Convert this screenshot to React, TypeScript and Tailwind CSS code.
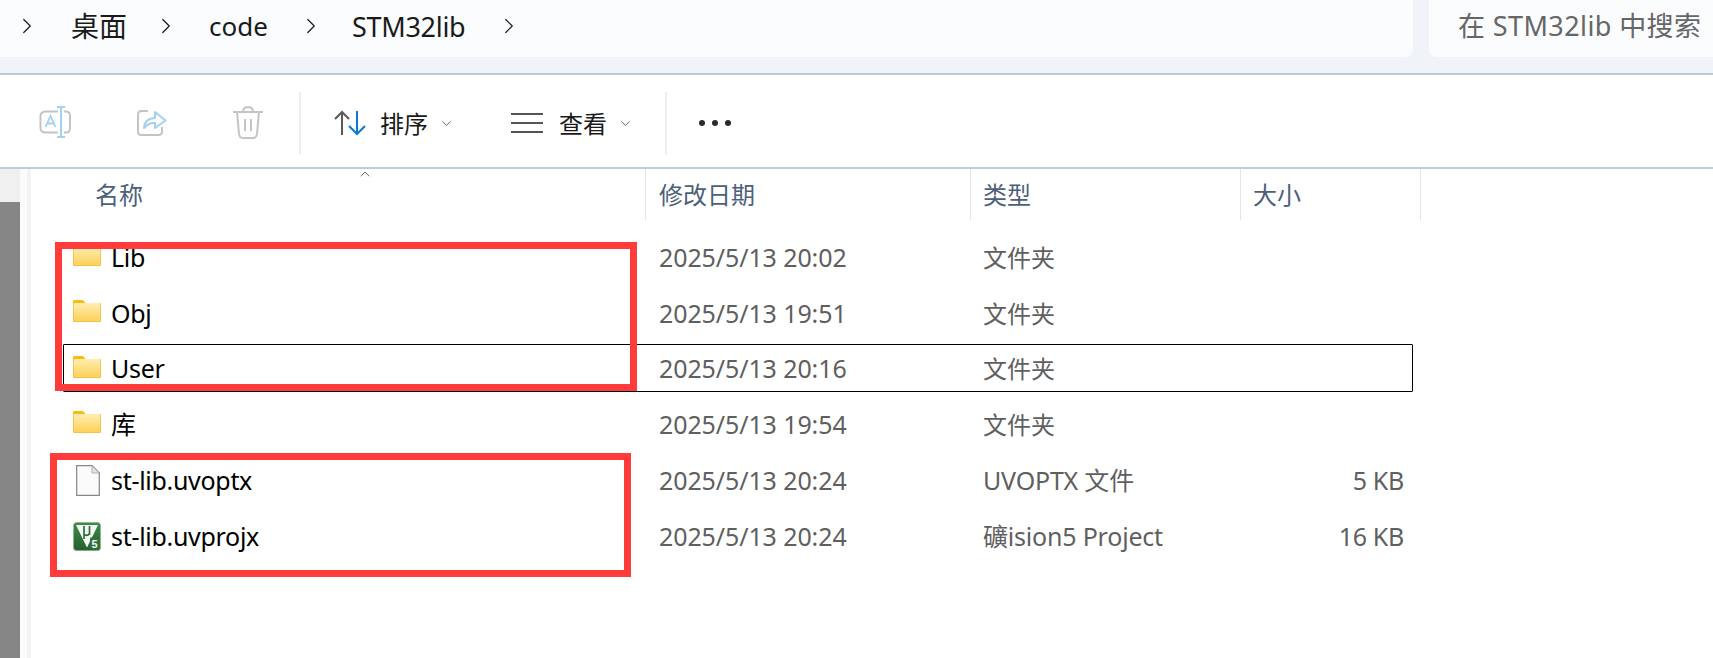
import { ChevronRight, ChevronDown, ChevronUp } from 'lucide-react'

const rows = [
  { name: 'Lib', date: '2025/5/13 20:02', type: '文件夹', size: '', icon: 'folder' },
  { name: 'Obj', date: '2025/5/13 19:51', type: '文件夹', size: '', icon: 'folder' },
  { name: 'User', date: '2025/5/13 20:16', type: '文件夹', size: '', icon: 'folder', focused: true },
  { name: '库', date: '2025/5/13 19:54', type: '文件夹', size: '', icon: 'folder' },
  { name: 'st-lib.uvoptx', date: '2025/5/13 20:24', type: 'UVOPTX 文件', size: '5 KB', icon: 'file' },
  { name: 'st-lib.uvprojx', date: '2025/5/13 20:24', type: '礦ision5 Project', size: '16 KB', icon: 'keil' },
]

function FolderIcon() {
  return (
    <svg width="28" height="22" viewBox="0 0 28 22" className="mt-[-5px]">
      <defs>
        <linearGradient id="folderBody" x1="0" y1="0" x2="0" y2="1">
          <stop offset="0" stopColor="#feeeb0" />
          <stop offset="1" stopColor="#fdcf55" />
        </linearGradient>
      </defs>
      <path d="M0 1.500Q0 0 1.500 0H8.500Q10 0 11 1L12.500 3H0Z" fill="#fcb914" />
      <path d="M0 3H28V20.500Q28 22 26.500 22H1.500Q0 22 0 20.500Z" fill="url(#folderBody)" />
      <path d="M.4 3V20.500Q.4 21.600 1.500 21.600H26.500Q27.600 21.600 27.600 20.500V3" fill="none" stroke="#f3b93c" strokeWidth=".8" />
    </svg>
  )
}

function FileIcon() {
  return (
    <svg width="24" height="31" viewBox="0 0 24 31" className="ml-[3px]">
      <path d="M.7.7H16L23.3 8V30.3H.7Z" fill="#fbfbfc" stroke="#868686" strokeWidth="1.2" />
      <path d="M16 .7V8H23.3Z" fill="#e4e4e4" stroke="#a0a0a0" strokeWidth=".8" />
    </svg>
  )
}

function KeilIcon() {
  return (
    <svg width="28" height="29" viewBox="0 0 28 29">
      <defs>
        <linearGradient id="keilBg" x1="0" y1="0" x2="0" y2="1">
          <stop offset="0" stopColor="#3f8a48" />
          <stop offset="1" stopColor="#25602f" />
        </linearGradient>
      </defs>
      <rect x=".3" y=".3" width="27.4" height="28.4" rx="3.5" fill="url(#keilBg)" stroke="#b9cfbb" strokeWidth=".6" />
      <path d="M3 3H25L14 25.500Z" fill="#f4f8f4" />
      <path d="M11 4V17M11 12.500Q14.500 14.500 16.500 11.500M16.500 4V13" fill="none" stroke="#2c6e35" strokeWidth="1.700" />
      <rect x="17" y="15.500" width="9.500" height="12" rx="1" fill="#2f7038" />
      <text x="21.500" y="26" textAnchor="middle" fontSize="11" fontWeight="700" fill="#f4f8f4" fontFamily="Liberation Sans, sans-serif">5</text>
    </svg>
  )
}

function RowIcon({ kind }: { kind: string }) {
  if (kind === 'file') return <FileIcon />
  if (kind === 'keil') return <KeilIcon />
  return <FolderIcon />
}

export default function App() {
  return (
    <div className="relative h-[658px] w-[1713px] overflow-hidden bg-white font-['Noto_Sans','Noto_Sans_CJK_SC',sans-serif] text-[25px]">
      {/* address bar */}
      <div className="flex h-[73px] gap-[16px] bg-[#f0f4f8]">
        <div className="flex h-[57px] w-[1413px] items-center rounded-br-lg bg-[#fbfcfe] pb-[5px] text-[#1a1a1a]">
          <ChevronRight className="ml-[14px] h-[26px] w-[26px]" strokeWidth={1.1} />
          <span className="ml-[31px] text-[28px] leading-none">桌面</span>
          <ChevronRight className="ml-[26px] h-[26px] w-[26px]" strokeWidth={1.1} />
          <span className="ml-[30px] w-[60px] text-[26px] leading-none">code</span>
          <ChevronRight className="ml-[29px] h-[26px] w-[26px]" strokeWidth={1.1} />
          <span className="ml-[28px] w-[114px] whitespace-nowrap text-[27px] leading-none tracking-[-0.3px]">STM32lib</span>
          <ChevronRight className="ml-[30px] h-[26px] w-[26px]" strokeWidth={1.1} />
        </div>
        <div className="flex h-[57px] flex-1 items-center rounded-bl-lg bg-[#fbfcfe] pb-[4px] pl-[29px] text-[27px] tracking-[0.4px] whitespace-nowrap text-[#666666]">
          在 STM32lib 中搜索
        </div>
      </div>
      <div className="h-[2px] bg-[#bccdd9]" />

      {/* toolbar */}
      <div className="flex h-[92px] items-center pt-[4px]">
        <svg width="34" height="32" viewBox="0 0 34 32" className="ml-[38px] mt-[-2px]" fill="none">
          <path d="M20 5.500H8Q2.500 5.500 2.500 10V22Q2.500 26.500 8 26.500H20M26 5.500H28Q32 5.500 32 10V22Q32 26.500 28 26.500H26" stroke="#c4c4c4" strokeWidth="2" />
          <path d="M19 1H27M23 1V31M19 31H27" stroke="#a4d0f2" strokeWidth="2" />
          <path d="M7.500 21L12.500 10L17.500 21M9.500 17.500H15.500" stroke="#a4d0f2" strokeWidth="1.800" />
        </svg>
        <svg width="30" height="30" viewBox="0 0 30 30" className="ml-[65px] mt-[-2px]" fill="none">
          <path d="M11 4H4.500Q1 4 1 7.500V24.500Q1 28 4.500 28H21.500Q25 28 25 24.500V20" stroke="#c4c4c4" strokeWidth="2" />
          <path d="M7 21Q7.500 11.500 18 11V5L28.500 13.500L18 21V16Q11.500 15.500 7 21Z" stroke="#a4d0f2" strokeWidth="2" strokeLinejoin="round" />
        </svg>
        <svg width="30" height="33" viewBox="0 0 30 33" className="ml-[66px] mt-[-2px]" fill="none" stroke="#c4c4c4" strokeWidth="2">
          <path d="M0 6H30M10 6Q10 1 15 1Q20 1 20 6" />
          <path d="M4 6L6 28Q6.500 32 10 32H20Q23.500 32 24 28L26 6" />
          <path d="M12 13V25M18 13V25" />
        </svg>
        <div className="ml-[36px] h-[62px] w-[2px] bg-[#eeeeee]" />
        <svg width="33" height="26" viewBox="0 0 33 26" className="ml-[33px]" fill="none" strokeWidth="2">
          <path d="M8 25V2M1 9L8 2L15 9" stroke="#5a5a5a" />
          <path d="M23 1V24M15 16L23 24L31 16" stroke="#0a78d7" />
        </svg>
        <span className="ml-[13px] mt-[2px] text-[24px] leading-none text-[#1a1a1a]">排序</span>
        <ChevronDown className="ml-[11px] h-[15px] w-[15px] text-[#555555]" strokeWidth={1.4} />
        <div className="ml-[57px] flex h-[20px] w-[32px] flex-col justify-between">
          <div className="h-[2px] bg-[#555555]" />
          <div className="h-[2px] bg-[#555555]" />
          <div className="h-[2px] bg-[#555555]" />
        </div>
        <span className="ml-[16px] mt-[2px] text-[24px] leading-none text-[#1a1a1a]">查看</span>
        <ChevronDown className="ml-[11px] h-[15px] w-[15px] text-[#555555]" strokeWidth={1.4} />
        <div className="ml-[32px] h-[62px] w-[2px] bg-[#eeeeee]" />
        <div className="ml-[32px] flex gap-[7px]">
          <div className="h-[6px] w-[6px] rounded-full bg-[#2b2b2b]" />
          <div className="h-[6px] w-[6px] rounded-full bg-[#2b2b2b]" />
          <div className="h-[6px] w-[6px] rounded-full bg-[#2b2b2b]" />
        </div>
      </div>
      <div className="h-[2px] bg-[#bccdd9]" />

      {/* file list */}
      <div className="flex h-[489px]">
        <div className="flex w-[20px] flex-col bg-[#f0f0f0]">
          <div className="h-[33px]" />
          <div className="flex-1 bg-[#868686]" />
        </div>
        <div className="w-[7px] bg-[#fbfbfb]" />
        <div className="w-[4px] bg-[#f3f3f3]" />
        <div className="flex-1">
          <div className="grid h-[51px] grid-cols-[615px_325px_270px_180px] text-[24px] text-[#4c607a]">
            <div className="flex items-center border-r border-[#e5e5e5] pl-[64px]">名称</div>
            <div className="flex items-center border-r border-[#e5e5e5] pl-[13px]">修改日期</div>
            <div className="flex items-center border-r border-[#e5e5e5] pl-[12px]">类型</div>
            <div className="flex items-center border-r border-[#e5e5e5] pl-[12px]">大小</div>
          </div>
          <div className="pt-[10px] pl-[32px]">
            {rows.map(row => (
              <div key={row.name} className="relative grid h-[55.7px] w-[1350px] grid-cols-[596px_324px_257px_164px] items-center">
                {row.focused && <div className="absolute inset-x-0 top-[2.6px] bottom-[5.4px] rounded-[1px] border border-black" />}
                <div className="flex items-center">
                  <div className="ml-[10px] flex w-[38px] items-center">
                    <RowIcon kind={row.icon} />
                  </div>
                  <span className="text-black tracking-[-0.3px]">{row.name}</span>
                </div>
                <div className="whitespace-nowrap tracking-[-0.1px] text-[#5f5f5f]">{row.date}</div>
                <div className={`whitespace-nowrap text-[#5f5f5f] ${row.icon === 'folder' ? 'text-[24px]' : 'tracking-[-0.2px]'}`}>{row.type}</div>
                <div className="text-right tracking-[-0.3px] text-[#5f5f5f]">{row.size}</div>
              </div>
            ))}
          </div>
        </div>
      </div>

      {/* sort caret on the name column */}
      <ChevronUp className="absolute left-[357px] top-[166px] h-[16px] w-[16px] text-[#555555]" strokeWidth={1.3} />

      {/* red highlight boxes drawn over the list */}
      <div className="absolute left-[55px] top-[242px] h-[149px] w-[582px] border-[7px] border-[#ff3b3b]" />
      <div className="absolute left-[50px] top-[453px] h-[124px] w-[581px] border-[7px] border-[#ff3b3b]" />
    </div>
  )
}
